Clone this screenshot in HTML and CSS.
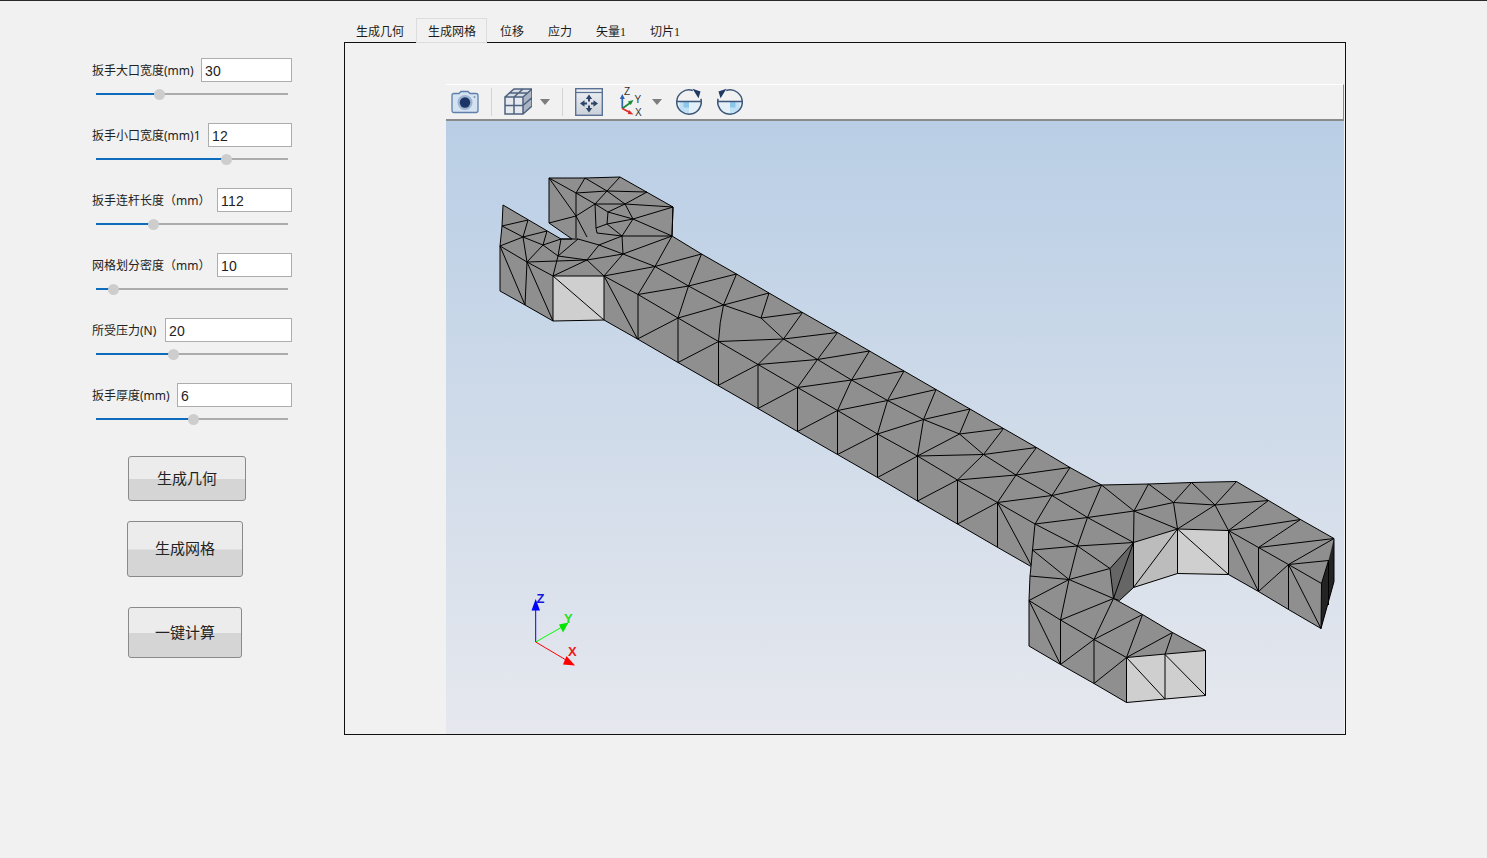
FILE: index.html
```html
<!DOCTYPE html>
<html lang="zh-CN">
<head>
<meta charset="utf-8">
<title>扳手</title>
<link rel="stylesheet" href="styles.css">
</head>
<body>
<div class="app">
  <aside class="panel">
    <div class="field">
      <div class="field-row"><label class="field-label">扳手大口宽度(mm)</label><input class="field-input w91" value="30"></div>
      <div class="slider"><div class="slider-fill" style="width:63px"></div><div class="slider-thumb" style="left:63px"></div></div>
    </div>
    <div class="field">
      <div class="field-row"><label class="field-label">扳手小口宽度(mm)1</label><input class="field-input w84" value="12"></div>
      <div class="slider"><div class="slider-fill" style="width:130px"></div><div class="slider-thumb" style="left:130px"></div></div>
    </div>
    <div class="field">
      <div class="field-row"><label class="field-label">扳手连杆长度（mm）</label><input class="field-input w75" value="112"></div>
      <div class="slider"><div class="slider-fill" style="width:57px"></div><div class="slider-thumb" style="left:57px"></div></div>
    </div>
    <div class="field">
      <div class="field-row"><label class="field-label">网格划分密度（mm）</label><input class="field-input w75" value="10"></div>
      <div class="slider"><div class="slider-fill" style="width:17px"></div><div class="slider-thumb" style="left:17px"></div></div>
    </div>
    <div class="field">
      <div class="field-row"><label class="field-label">所受压力(N)</label><input class="field-input w127" value="20"></div>
      <div class="slider"><div class="slider-fill" style="width:77px"></div><div class="slider-thumb" style="left:77px"></div></div>
    </div>
    <div class="field">
      <div class="field-row"><label class="field-label">扳手厚度(mm)</label><input class="field-input w115" value="6"></div>
      <div class="slider"><div class="slider-fill" style="width:97px"></div><div class="slider-thumb" style="left:97px"></div></div>
    </div>
    <button class="action action-geo">生成几何</button>
    <button class="action action-mesh">生成网格</button>
    <button class="action action-calc">一键计算</button>
  </aside>

  <section class="workspace">
    <nav class="tabs">
      <span class="tab">生成几何</span>
      <span class="tab tab-active">生成网格</span>
      <span class="tab">位移</span>
      <span class="tab">应力</span>
      <span class="tab">矢量1</span>
      <span class="tab">切片1</span>
    </nav>
    <div class="tab-body">
      <div class="viewer">
        <div class="toolbar">
          <svg class="tool cam" width="28" height="24" viewBox="0 0 28 24">
            <path d="M1 5.500Q1 3.500 3 3.500H8L10 1.500H17L19 3.500H25Q27 3.500 27 5.500V20.500Q27 22.500 25 22.500H3Q1 22.500 1 20.500Z" fill="#d4e2f1" stroke="#5f80a8" stroke-width="1.300"/>
            <circle cx="14" cy="12.500" r="7.500" fill="#9db4cf"/>
            <circle cx="14" cy="12.500" r="5.200" fill="#1c3566"/>
            <circle cx="23.500" cy="7" r="1" fill="#7f9abb"/>
          </svg>
          <span class="tool-sep ml12"></span>
          <svg class="tool ml12" width="28" height="28" viewBox="0 0 28 28">
            <path d="M1 9H19V26H1Z" fill="#e6e9ee"/>
            <path d="M1 9L10 1H28L19 9Z" fill="#d8dde5"/>
            <path d="M19 9L28 1V18L19 26Z" fill="#aab4c3"/>
            <path d="M1 9H19V26H1ZM1 9L10 1H28L19 9M28 1V18L19 26M10 9V26M1 17.500H19M10 9L19 1M5.500 5H23.500M19 17.500L28 9.500" fill="none" stroke="#4d627f" stroke-width="1.500"/>
          </svg>
          <span class="caret ml8"></span>
          <span class="tool-sep ml12"></span>
          <svg class="tool ml12" width="28" height="28" viewBox="0 0 28 28">
            <defs><linearGradient id="fitbg" x1="0" y1="0" x2="0" y2="1"><stop offset="0" stop-color="#eef0f3"/><stop offset="1" stop-color="#cbd0d9"/></linearGradient></defs>
            <rect x="0.700" y="0.700" width="26.600" height="26.600" fill="url(#fitbg)" stroke="#5a7196" stroke-width="1.400"/>
            <path d="M1 4.500H27" stroke="#5a7196" stroke-width="1.200"/>
            <path d="M14 6.500L10.800 11H13V13.500H15V11H17.200ZM14 24.500L10.800 20H13V17.500H15V20H17.200ZM5 15.500L9.500 12.300V14.500H12V16.500H9.500V18.700ZM23 15.500L18.500 12.300V14.500H16V16.500H18.500V18.700Z" fill="#2b4468"/>
          </svg>
          <svg class="tool ml16" width="26" height="32" viewBox="0 -2 26 32">
            <path d="M3.300 20.500V10" stroke="#2d63b4" stroke-width="1.700"/>
            <path d="M3.300 6L0.800 11H5.800Z" fill="#2d63b4"/>
            <path d="M3.300 20.500L11 15" stroke="#1d8a3e" stroke-width="1.700"/>
            <path d="M14.500 12L8.800 13.500L11.800 17Z" fill="#1d8a3e"/>
            <path d="M3.300 20.500L11 24.500" stroke="#e02a2a" stroke-width="1.700"/>
            <path d="M14.500 26.500L10 22L8.800 26Z" fill="#e02a2a"/>
            <text class="axis-mini" x="5" y="6.500">Z</text>
            <text class="axis-mini" x="15.500" y="14.500">Y</text>
            <text class="axis-mini" x="16" y="27.500">X</text>
          </svg>
          <span class="caret ml7"></span>
          <svg class="tool ml14" width="26" height="28" viewBox="0 0 26 28">
            <path d="M0.700 14A12.300 12.300 0 0 0 25.300 14Z" fill="#e4f0f8"/>
            <path d="M3.500 14H13V26.500Q6.500 26 3.500 21Z" fill="#bfe0f5"/>
            <path d="M7.500 14H13V19.500H7.500Z" fill="#8cc6ea"/>
            <path d="M0.700 13.600H25.300M0.700 14.200A12.300 12.300 0 0 1 16.800 2.500M24.900 10.800A12.300 12.300 0 1 1 0.700 14.200" fill="none" stroke="#3d5679" stroke-width="1.500"/>
            <path d="M16.500 0.700L24.500 3.500L22.500 10.200Z" fill="#1f3a63"/>
          </svg>
          <svg class="tool ml15" width="26" height="28" viewBox="0 0 26 28">
            <path d="M0.700 14A12.300 12.300 0 0 0 25.300 14Z" fill="#e4f0f8"/>
            <path d="M22.500 14H13V26.500Q19.500 26 22.500 21Z" fill="#bfe0f5"/>
            <path d="M13 14H18.500V19.500H13Z" fill="#8cc6ea"/>
            <path d="M0.700 13.600H25.300M25.300 14.200A12.300 12.300 0 0 0 9.200 2.500M1.100 10.800A12.300 12.300 0 1 0 25.300 14.200" fill="none" stroke="#3d5679" stroke-width="1.500"/>
            <path d="M9.500 0.700L1.500 3.500L3.500 10.200Z" fill="#1f3a63"/>
          </svg>
        </div>
        <svg class="scene" width="898" height="613" viewBox="446 121 898 613">
          <path class="face-mid" d="M503 205L561 239L572 239L549 223V178L585 178L620 177L673 207L672 236L701.500 254L736.500 274L769 293L802.500 312.500L837.500 332.500L869.500 351L904 371L936 389.500L970 409L1003.500 428.500L1036.500 447.500L1070 467.500L1101.500 485L1148.500 484L1191.500 482.500L1236.500 481.500L1268.500 500.500L1300.500 519.500L1334 538.500V581.500L1321 628.500L1288.500 609.500L1258.500 591.500L1228.500 574.500L1177.500 573.500L1133.500 587.500L1119.500 600.500L1113.500 598.500L1142.500 614.500L1172.500 632.500L1205.500 650.500V695.500L1165 699L1126.500 702.500L1094 683.500L1060.500 664.500L1029 646V600.500L1030 576L1031 566.500L997 547L957.500 524L917.500 501L877.500 477.500L837.500 454.500L797.500 431.500L758 408.500L718 385.500L678 362.500L637.500 339L604 320L553 321L525 305L500 291V246L502 226Z"/>
          <path class="face-light" d="M553 276H604V320L553 321Z"/>
          <path class="face-light" d="M1126.500 657.500L1205.500 650.500V695.500L1126.500 702.500Z"/>
          <path class="face-light" d="M1177.500 529L1228.500 530.500V574.500L1177.500 573.500Z"/>
          <path class="face-soft" d="M1133.500 542.500L1177.500 529V573.500L1133.500 587.500Z"/>
          <path class="face-dim" d="M1110 568.500L1133.500 542.500V587.500L1119.500 600.500L1113.500 598.500Z"/>
          <path class="face-dark" d="M1334 538.500V581.500L1321 628.500L1321.500 583.500L1328.500 560.500Z"/>
          <path class="edges" d="M502 226L528 220M502 226L523 237M528 220L523 237M523 237L547 231M523 237L543 245M547 231L543 245M543 245L561 239M500 246L523 237M500 246L527 262M523 237L527 262M527 262L543 245M527 262L587 260M543 245L558 256M558 256L561 239M558 256L578 239M558 256L587 260M558 256L553 276M587 260L553 276M587 260L604 276M587 260L599 245M587 260L623 254M599 245L578 239M599 245L623 254M599 245L622 236M622 236L623 254M623 254L655 266.500M623 254L604 276M604 276L655 266.500M622 236L672 236M623 254L672 236M655 266.500L672 236M561 239L578 239M527 262L525 305M500 246L525 305M527 262L553 276M527 262L553 321M553 276H604V320M553 276V321M553 276L604 320"/>
          <path class="edges" d="M549 178L576 193M576 193L585 178M585 178L607 191M576 193L607 191M607 191L620 177M607 191L647 192M607 191L625 204M607 191L595 204M576 193L595 204M576 193V216M549 178L576 216M549 223L576 216M576 216V238M576 216L595 204M576 216L587 237M595 204L608 212M595 204H625M625 204L647 192M625 204L673 207M625 204L608 212M625 204L633 219M608 212L633 219M633 219L673 207M633 219L672 236M633 219L622 236M608 212L607 224M607 224L633 219M607 224L596 228M596 228L595 204M596 228L597 233M597 233L622 236M607 224L622 236M673 207L672 236"/>
          <path class="edges" d="M655 266.500L701.500 254M655 266.500L638 294.500M655 266.500L688.500 286M604 276L638 294.500M604 276L637.500 339M638 294.500V339M638 294.500L688.500 286M638 294.500L678 318M637.500 339L678 318M678 318V362.500M678 362.500L718.500 341.500M678 318L718.500 341.500M678 318L688.500 286M678 318L723.500 305M688.500 286L701.500 254M688.500 286L736.500 274M688.500 286L723.500 305M723.500 305L736.500 274M723.500 305L769 293M723.500 305L761 318M723.500 305Q719.500 322 718.500 341.500M718.500 341.500V385.500M718 385.500L758 364.500M718.500 341.500L758 364.500"/>
          <path class="edges" d="M761 318L769 293M761 318L802.500 312.500M761 318L783.500 339M783.500 339L802.500 312.500M783.500 339L837.500 332.500M783.500 339L817.500 359.500M783.500 339L758 364.500M783.500 339L718.500 341.500M758 364.500L817.500 359.500M758 364.500L797.500 387.500M758 364.500V408.500M758 408.500L797.500 387.500M797.500 387.500L817.500 359.500M797.500 387.500L851.500 380M797.500 387.500V431.500M797.500 387.500L837.500 410.500M797.500 431.500L837.500 410.500M817.500 359.500L837.500 332.500M817.500 359.500L869.500 351M817.500 359.500L851.500 380M851.500 380L869.500 351M851.500 380L904 371M851.500 380L887.500 400.500M851.500 380L837.500 410.500M837.500 410.500L887.500 400.500M837.500 410.500V454.500M837.500 410.500L877.500 434M837.500 454.500L877.500 434M887.500 400.500L904 371M887.500 400.500L936 389.500M887.500 400.500L923.500 419.500M887.500 400.500L877.500 434M877.500 434L923.500 419.500M877.500 434V477.500M877.500 434L917.500 456M877.500 477.500L917.500 456M923.500 419.500L936 389.500M923.500 419.500L970 409M923.500 419.500L959.500 434M923.500 419.500L917.500 456M917.500 456L959.500 434M917.500 456L983.500 454.500M917.500 456V501M917.500 456L957.500 480M917.500 501L957.500 480M959.500 434L970 409M959.500 434L1003.500 428.500M959.500 434L983.500 454.500M983.500 454.500L1003.500 428.500M983.500 454.500L1036.500 447.500M983.500 454.500L1016 475M983.500 454.500L957.500 480M957.500 480L1016 475M957.500 480V524M957.500 480L997.500 502.500M957.500 524L997.500 502.500M1016 475L1036.500 447.500M1016 475L1070 467.500M1016 475L1052 495.500M1016 475L997.500 502.500M997.500 502.500L1052 495.500M997.500 502.500V547M997.500 502.500L1035 524M997.500 502.500L1031 565"/>
          <path class="edges" d="M1052 495.500L1070 467.500M1052 495.500L1101.500 485M1052 495.500L1087.500 517.500M1052 495.500L1035 524M1035 524L1087.500 517.500M1087.500 517.500L1101.500 485M1087.500 517.500L1134 511M1101.500 485L1134 511M1134 511L1148.500 484M1134 511L1173.500 502.500M1148.500 484L1173.500 502.500M1173.500 502.500L1191.500 482.500M1191.500 482.500L1215 505M1173.500 502.500L1215 505M1215 505L1236.500 481.500M1215 505L1268.500 500.500M1173.500 502.500L1177.500 529M1134 511L1177.500 529M1215 505L1177.500 529M1215 505L1228.500 530.500M1268.500 500.500L1228.500 530.500M1228.500 530.500L1300.500 519.500M1228.500 530.500L1258.500 547.500M1258.500 547.500L1300.500 519.500M1258.500 547.500L1334 538.500M1258.500 547.500L1288.500 564.500M1288.500 564.500L1334 538.500M1288.500 564.500L1328.500 560.500M1134 511L1133.500 542.500M1087.500 517.500L1133.500 542.500M1077.500 546L1087.500 517.500M1077.500 546L1133.500 542.500M1032.500 550L1077.500 546M1035 524L1077.500 546M1035 524L1032.500 550L1031 566.500M1032.500 550L1069 579.500M1077.500 546L1069 579.500M1077.500 546L1110 568.500M1110 568.500L1133.500 542.500M1069 579.500L1110 568.500M1030 576L1069 579.500M1029 600.500L1069 579.500M1069 579.500L1113.500 598.500M1069 579.500L1060.500 620M1029 600.500L1060.500 620M1060.500 620L1113.500 598.500M1060.500 620L1094 639.500M1094 639.500L1113.500 598.500M1094 639.500L1142.500 614.500M1094 639.500L1126.500 657.500M1126.500 657.500L1142.500 614.500M1126.500 657.500L1172.500 632.500M1126.500 657.500L1205.500 650.500M1165 654.500L1172.500 632.500M1029 600.500L1060.500 664.500M1060.500 620V664.500M1060.500 664.500L1094 639.500M1094 639.500V683.500M1094 683.500L1126.500 657.500M1126.500 657.500V702.500M1126.500 657.500L1165 699M1165 654.500V699M1165 654.500L1205.500 695.500M1110 568.500L1113.500 598.500M1113.500 598.500L1133.500 542.500M1133.500 542.500V587.500M1133.500 587.500L1177.500 529M1177.500 529V573.500M1177.500 529L1228.500 530.500M1133.500 542.500L1177.500 529M1177.500 529L1228.500 574.500M1228.500 530.500V574.500M1228.500 530.500L1258.500 591.500M1258.500 547.500V591.500M1258.500 591.500L1288.500 564.500M1288.500 564.500V609.500M1288.500 564.500L1321 628.500M1288.500 564.500L1321.500 583.500M1321.500 583.500L1321 628.500M1328.500 560.500L1321.500 583.500M1328.500 560.500V605"/>
          <path class="outline" d="M503 205L561 239L572 239L549 223V178L585 178L620 177L673 207L672 236L701.500 254L736.500 274L769 293L802.500 312.500L837.500 332.500L869.500 351L904 371L936 389.500L970 409L1003.500 428.500L1036.500 447.500L1070 467.500L1101.500 485L1148.500 484L1191.500 482.500L1236.500 481.500L1268.500 500.500L1300.500 519.500L1334 538.500V581.500L1321 628.500L1288.500 609.500L1258.500 591.500L1228.500 574.500L1177.500 573.500L1133.500 587.500L1119.500 600.500L1113.500 598.500L1142.500 614.500L1172.500 632.500L1205.500 650.500V695.500L1165 699L1126.500 702.500L1094 683.500L1060.500 664.500L1029 646V600.500L1030 576L1031 566.500L997 547L957.500 524L917.500 501L877.500 477.500L837.500 454.500L797.500 431.500L758 408.500L718 385.500L678 362.500L637.500 339L604 320L553 321L525 305L500 291V246L502 226Z"/>
          <path class="axis-z" d="M535.700 642V607" />
          <path class="axis-y" d="M535.700 642L562 627" />
          <path class="axis-x" d="M535.700 642L566 660" />
          <path class="cone-z" d="M535.700 599L531.500 610.500H540Z"/>
          <path class="cone-y" d="M568.500 622.500L559 624.500L563 632.500Z"/>
          <path class="cone-x" d="M575 665.500L566.500 656L563 664.500Z"/>
          <text class="axis-z-label" x="536.500" y="603">Z</text>
          <text class="axis-y-label" x="564" y="623">Y</text>
          <text class="axis-x-label" x="568" y="655.500">X</text>
        </svg>
      </div>
    </div>
  </section>
</div>
</body>
</html>
```
FILE: styles.css
```css
* { box-sizing: border-box; }

html, body {
  margin: 0;
  height: 100%;
  background: #f1f1f1;
  overflow: hidden;
}

body {
  border-top: 1px solid #2a2a2a;
  font-family: "Noto Sans", "Noto Sans CJK SC", sans-serif;
  color: #222;
}

.app {
  display: flex;
  align-items: flex-start;
}

.panel {
  width: 344px;
  padding: 57px 0 0 92px;
  display: flex;
  flex-direction: column;
  align-items: flex-start;
}

.field {
  width: 200px;
  height: 65px;
}

.field-row {
  display: flex;
  justify-content: space-between;
  align-items: center;
  height: 24px;
}

.field-label {
  padding-top: 2px;
  font-size: 12px;
  line-height: 22px;
  white-space: nowrap;
  font-family: "Noto Sans", "Noto Sans CJK SC", sans-serif;
}

.field-input {
  height: 24px;
  flex: none;
  padding: 2px 0 0 3px;
  background: #fff;
  border: 1px solid #adadad;
  border-radius: 0;
  outline: none;
  font-family: "Liberation Sans", sans-serif;
  font-size: 14px;
  letter-spacing: 0.2px;
  color: #222;
}

.w91 { width: 91px; }
.w84 { width: 84px; }
.w75 { width: 75px; }
.w127 { width: 127px; }
.w115 { width: 115px; }

.slider {
  position: relative;
  width: 192px;
  height: 2px;
  margin: 11px 0 0 4px;
  background: #acacac;
}

.slider-fill {
  height: 2px;
  background: #0f6cbd;
}

.slider-thumb {
  position: absolute;
  top: -4.500px;
  width: 11px;
  height: 11px;
  margin-left: -5.500px;
  border-radius: 50%;
  background: #cdcdcd;
}

.action {
  display: block;
  padding: 0 0 3px;
  border: 1px solid #8a8a8a;
  border-radius: 3px;
  background: linear-gradient(to bottom, #ececec 0, #ececec 50%, #d5d5d5 52%, #d5d5d5 100%);
  font-family: "Noto Sans CJK SC", sans-serif;
  font-size: 15px;
  font-weight: 400;
  color: #222;
}

.action-geo { width: 118px; height: 45px; margin: 8px 0 0 36px; }
.action-mesh { width: 116px; height: 56px; margin: 20px 0 0 35px; }
.action-calc { width: 114px; height: 51px; margin: 30px 0 0 36px; }

.workspace {
  width: 1002px;
  padding-top: 17px;
}

.tabs {
  position: relative;
  z-index: 1;
  display: flex;
  height: 25px;
  margin-bottom: -1px;
}

.tab {
  height: 25px;
  padding: 5px 12px 0;
  font-family: "Liberation Serif", "Noto Sans CJK SC", serif;
  font-size: 12px;
  line-height: 18px;
  color: #1c1c1c;
  white-space: nowrap;
}

.tab-active {
  border: 1px solid #dcdcdc;
  padding: 4px 10px 0 11px;
  margin-right: 1px;
  background: #f1f1f1;
}

.tab-body {
  height: 693px;
  padding: 41px 1px 0 101px;
  border: 1px solid #111;
}

.viewer {
  display: flex;
  flex-direction: column;
  width: 898px;
  height: 650px;
}

.toolbar {
  flex: none;
  display: flex;
  align-items: center;
  height: 37px;
  padding-left: 5px;
  background: #f1f1f1;
  border-top: 1px solid #fff;
  border-bottom: 2px solid #8b8b8b;
  border-right: 1px solid #8b8b8b;
}

.tool { flex: none; display: block; }

.tool-sep {
  flex: none;
  width: 1px;
  height: 28px;
  background: #d4d4d4;
}

.caret {
  flex: none;
  width: 0;
  height: 0;
  border-left: 5px solid transparent;
  border-right: 5px solid transparent;
  border-top: 6px solid #7d7d7d;
}

.ml7 { margin-left: 7px; }
.ml8 { margin-left: 8px; }
.ml12 { margin-left: 12px; }
.ml14 { margin-left: 14px; }
.ml15 { margin-left: 15px; }
.ml16 { margin-left: 16px; }

.axis-mini {
  font-family: "Liberation Sans", sans-serif;
  font-size: 10px;
  fill: #333;
}

.scene {
  display: block;
  flex: none;
  background: linear-gradient(to bottom, #b9cee5 0%, #e6e8ee 100%);
}

.face-mid { fill: #8f8f8f; }
.face-light { fill: #cfcfcf; }
.face-soft { fill: #bcbcbc; }
.face-dim { fill: #666; }
.face-dark { fill: #232323; }

.edges, .outline {
  fill: none;
  stroke: #000;
  stroke-width: 1;
}

.axis-z, .axis-y, .axis-x { fill: none; stroke-width: 1; }
.axis-z { stroke: #0000ff; }
.axis-y { stroke: #00ff00; }
.axis-x { stroke: #ff0000; }
.cone-z { fill: #0000ff; }
.cone-y { fill: #00e600; }
.cone-x { fill: #ff0000; }

.axis-z-label, .axis-y-label, .axis-x-label {
  font-family: "Liberation Sans", sans-serif;
  font-weight: 700;
  font-size: 13px;
}
.axis-z-label { fill: #1414e0; }
.axis-y-label { fill: #22e022; }
.axis-x-label { fill: #f01818; }
```
